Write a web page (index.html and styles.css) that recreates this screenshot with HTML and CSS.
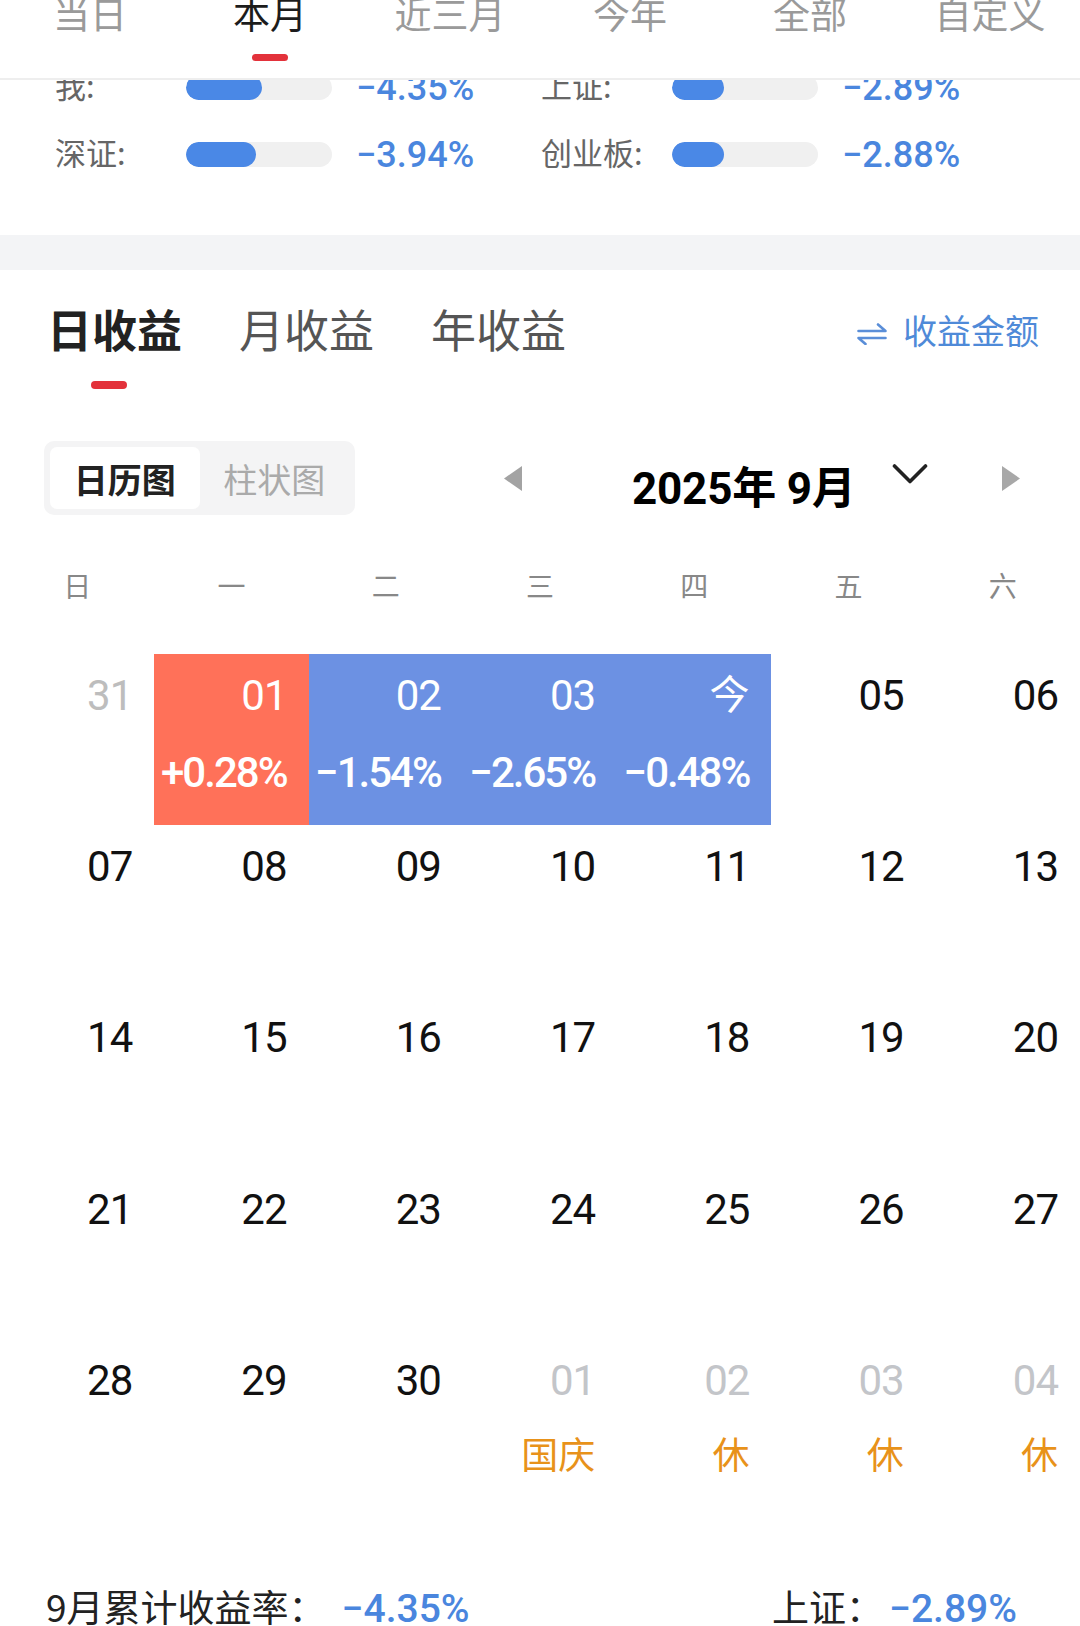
FILE: index.html
```html
<!DOCTYPE html>
<html lang="zh-CN">
<head>
<meta charset="utf-8">
<title>收益日历</title>
<link rel="stylesheet" href="styles.css">
</head>
<body>
<header class="period-tabs">
  <div class="ptab"><span class="ptab-label">当日</span></div>
  <div class="ptab active"><span class="ptab-label">本月</span><i class="ptab-bar"></i></div>
  <div class="ptab"><span class="ptab-label">近三月</span></div>
  <div class="ptab"><span class="ptab-label">今年</span></div>
  <div class="ptab"><span class="ptab-label">全部</span></div>
  <div class="ptab"><span class="ptab-label">自定义</span></div>
</header>

<section class="compare">
  <div class="compare-inner">
    <div class="cmp-row">
      <div class="cmp-item">
        <span class="cmp-label">我:</span>
        <span class="track"><span class="fill" style="width:76px"></span></span>
        <span class="cmp-val">−4.35%</span>
      </div>
      <div class="cmp-item">
        <span class="cmp-label">上证:</span>
        <span class="track"><span class="fill" style="width:52px"></span></span>
        <span class="cmp-val">−2.89%</span>
      </div>
    </div>
    <div class="cmp-row">
      <div class="cmp-item">
        <span class="cmp-label">深证:</span>
        <span class="track"><span class="fill" style="width:70px"></span></span>
        <span class="cmp-val">−3.94%</span>
      </div>
      <div class="cmp-item">
        <span class="cmp-label">创业板:</span>
        <span class="track"><span class="fill" style="width:52px"></span></span>
        <span class="cmp-val">−2.88%</span>
      </div>
    </div>
  </div>
</section>

<div class="band"></div>

<section class="profit">
  <div class="profit-tabs">
    <div class="ttab active"><span class="ttab-label">日收益</span><i class="ttab-bar"></i></div>
    <div class="ttab"><span class="ttab-label">月收益</span></div>
    <div class="ttab"><span class="ttab-label">年收益</span></div>
    <div class="switch">
      <svg class="switch-icon" width="30" height="22" viewBox="0 0 30 22" aria-hidden="true">
        <path d="M1.5 8H28.5L21 1.5" fill="none" stroke="currentColor" stroke-width="2.6" stroke-linecap="round" stroke-linejoin="round"/>
        <path d="M28.5 15H1.5L8.5 21" fill="none" stroke="currentColor" stroke-width="2.6" stroke-linecap="round" stroke-linejoin="round"/>
      </svg>
      <span>收益金额</span>
    </div>
  </div>

  <div class="toolbar">
    <div class="seg">
      <span class="seg-item on">日历图</span>
      <span class="seg-item">柱状图</span>
    </div>
    <div class="month-nav">
      <svg class="tri" width="18" height="25" viewBox="0 0 18 25" aria-hidden="true"><polygon points="18,0 18,25 0,12.5" fill="#a3a3a3"/></svg>
      <span class="month-title">2025年 9月</span>
      <svg class="chev" width="36" height="22" viewBox="0 0 36 22" aria-hidden="true"><polyline points="2.5,3 18,18.5 33.5,3" fill="none" stroke="#222" stroke-width="3.6" stroke-linecap="round" stroke-linejoin="round"/></svg>
      <svg class="tri tri-next" width="18" height="25" viewBox="0 0 18 25" aria-hidden="true"><polygon points="0,0 0,25 18,12.5" fill="#a8a8a8"/></svg>
    </div>
  </div>

  <div class="weekdays">
    <span>日</span><span>一</span><span>二</span><span>三</span><span>四</span><span>五</span><span>六</span>
  </div>

  <div class="cal">
    <div class="cell"><span class="d muted">31</span></div>
    <div class="cell up"><span class="d">01</span><span class="p">+0.28%</span></div>
    <div class="cell down"><span class="d">02</span><span class="p">−1.54%</span></div>
    <div class="cell down"><span class="d">03</span><span class="p">−2.65%</span></div>
    <div class="cell down"><span class="d today">今</span><span class="p">−0.48%</span></div>
    <div class="cell"><span class="d">05</span></div>
    <div class="cell"><span class="d">06</span></div>

    <div class="cell"><span class="d">07</span></div>
    <div class="cell"><span class="d">08</span></div>
    <div class="cell"><span class="d">09</span></div>
    <div class="cell"><span class="d">10</span></div>
    <div class="cell"><span class="d">11</span></div>
    <div class="cell"><span class="d">12</span></div>
    <div class="cell"><span class="d">13</span></div>

    <div class="cell"><span class="d">14</span></div>
    <div class="cell"><span class="d">15</span></div>
    <div class="cell"><span class="d">16</span></div>
    <div class="cell"><span class="d">17</span></div>
    <div class="cell"><span class="d">18</span></div>
    <div class="cell"><span class="d">19</span></div>
    <div class="cell"><span class="d">20</span></div>

    <div class="cell"><span class="d">21</span></div>
    <div class="cell"><span class="d">22</span></div>
    <div class="cell"><span class="d">23</span></div>
    <div class="cell"><span class="d">24</span></div>
    <div class="cell"><span class="d">25</span></div>
    <div class="cell"><span class="d">26</span></div>
    <div class="cell"><span class="d">27</span></div>

    <div class="cell"><span class="d">28</span></div>
    <div class="cell"><span class="d">29</span></div>
    <div class="cell"><span class="d">30</span></div>
    <div class="cell"><span class="d muted2">01</span><span class="h">国庆</span></div>
    <div class="cell"><span class="d muted2">02</span><span class="h">休</span></div>
    <div class="cell"><span class="d muted2">03</span><span class="h">休</span></div>
    <div class="cell"><span class="d muted2">04</span><span class="h">休</span></div>
  </div>

  <div class="summary">
    <div class="sum-item"><span class="sum-label">9月累计收益率：</span><span class="sum-val sum-val-left">−4.35%</span></div>
    <div class="sum-item"><span class="sum-label">上证：</span><span class="sum-val">−2.89%</span></div>
  </div>
</section>
</body>
</html>
```

FILE: styles.css
```css
html, body {
  margin: 0;
  padding: 0;
}

body {
  width: 1080px;
  height: 1626px;
  overflow: hidden;
  background: #ffffff;
  font-family: "Noto Sans CJK SC", "Noto Sans", sans-serif;
  color: #222;
}

/* ---------- period tabs (sticky header) ---------- */
.period-tabs {
  display: grid;
  grid-template-columns: repeat(6, 1fr);
  height: 78px;
  border-bottom: 2px solid #eeeeee;
  background: #fff;
  overflow: hidden;
}

.ptab {
  display: flex;
  flex-direction: column;
  align-items: center;
}

.ptab-label {
  font-size: 37px;
  line-height: 37px;
  margin-top: -5px;
  color: #9a9a9a;
  white-space: nowrap;
}

.ptab.active .ptab-label {
  color: #1c1c1c;
}

.ptab-bar {
  display: block;
  width: 36px;
  height: 7px;
  border-radius: 4px;
  background: #e3323b;
  margin-top: 22px;
}

/* ---------- compare bars ---------- */
.compare {
  height: 154.5px;
  overflow: hidden;
}

.compare-inner {
  margin-top: -26px;
  padding-left: 55px;
}

.cmp-row {
  display: flex;
  height: 67px;
  align-items: center;
}

.cmp-item {
  width: 486px;
  display: flex;
  align-items: center;
}

.cmp-label {
  width: 131px;
  font-size: 31px;
  line-height: 31px;
  margin-bottom: 6px;
  color: #666;
}

.track {
  display: block;
  width: 146px;
  height: 25px;
  border-radius: 13px;
  background: #f0f0f0;
  overflow: hidden;
}

.fill {
  display: block;
  height: 100%;
  border-radius: 13px;
  background: #4a88e6;
}

.cmp-val {
  margin-left: 24px;
  font-family: "Roboto", "Noto Sans CJK SC", sans-serif;
  font-size: 36px;
  line-height: 36px;
  font-weight: 500;
  color: #4a86de;
}

.band {
  height: 35.5px;
  background: #f3f4f6;
}

/* ---------- profit section ---------- */
.profit-tabs {
  display: flex;
  align-items: flex-start;
  padding: 35.5px 41px 0 47px;
}

.ttab {
  display: flex;
  flex-direction: column;
  align-items: flex-start;
  margin-right: 57px;
}

.ttab-label {
  font-size: 45px;
  line-height: 45px;
  color: #555;
  white-space: nowrap;
}

.ttab.active .ttab-label {
  font-weight: 700;
  color: #222;
}

.ttab-bar {
  display: block;
  width: 36px;
  height: 8px;
  border-radius: 4px;
  background: #e3323b;
  margin-top: 30.5px;
  margin-left: 44px;
}

.switch {
  margin-left: auto;
  margin-top: 7px;
  display: flex;
  align-items: flex-start;
  font-size: 34px;
  line-height: 34px;
  color: #4f8ad8;
  white-space: nowrap;
}

.switch-icon {
  margin-top: 10.5px;
  margin-right: 16px;
  color: #5a8ed8;
}

/* toolbar */
.toolbar {
  display: flex;
  align-items: center;
  margin-top: 52px;
  padding-left: 44px;
  height: 74px;
}

.seg {
  display: flex;
  box-sizing: border-box;
  width: 311px;
  height: 74px;
  padding: 6px;
  border-radius: 10px;
  background: #f4f4f5;
}

.seg-item {
  flex: 1;
  display: flex;
  align-items: center;
  justify-content: center;
  font-size: 34px;
  color: #aaaaaa;
  border-radius: 7px;
}

.seg-item.on {
  background: #fff;
  font-weight: 700;
  color: #222;
}

.month-nav {
  flex: 1;
  display: flex;
  align-items: center;
  height: 74px;
}

.tri {
  flex: none;
  margin-left: 149px;
}

.month-title {
  flex: none;
  margin-left: 110px;
  margin-top: 22px;
  font-family: "Roboto", "Noto Sans CJK SC", sans-serif;
  font-size: 44px;
  line-height: 44px;
  font-weight: 700;
  color: #000;
  letter-spacing: -0.2px;
  white-space: nowrap;
}

.chev {
  flex: none;
  margin-left: 36px;
  margin-bottom: 8px;
}

.tri.tri-next {
  margin-left: auto;
  margin-right: 60px;
}

/* weekdays */
.weekdays {
  display: grid;
  grid-template-columns: repeat(7, 1fr);
  margin-top: 56px;
  font-size: 28px;
  line-height: 28px;
  color: #888;
  text-align: center;
}

/* calendar grid */
.cal {
  display: grid;
  grid-template-columns: repeat(7, 1fr);
  grid-auto-rows: 171.4px;
  margin-top: 54.6px;
}

.cell {
  display: flex;
  flex-direction: column;
  align-items: flex-end;
  padding: 21px 22px 0 0;
  font-family: "Roboto", "Noto Sans CJK SC", sans-serif;
}

.cell.up {
  background: #ff7159;
}

.cell.down {
  background: #6c91e3;
}

.d {
  font-size: 42px;
  line-height: 42px;
  letter-spacing: -1px;
  color: #111;
}

.d.muted {
  color: #bdbdbd;
}

.d.muted2 {
  color: #c3c5c9;
}

.d.today {
  font-size: 40px;
  letter-spacing: 0;
}

.cell.up .d,
.cell.down .d {
  color: #fff;
}

.p {
  margin-top: 35px;
  font-size: 42px;
  line-height: 42px;
  font-weight: 500;
  letter-spacing: -2px;
  color: #fff;
  white-space: nowrap;
}

.h {
  margin-top: 30px;
  font-family: "Noto Sans CJK SC", sans-serif;
  font-size: 37px;
  line-height: 42px;
  color: #e8921a;
}

/* summary */
.summary {
  display: flex;
  justify-content: space-between;
  margin-top: 77px;
  padding: 0 63px 0 46px;
}

.sum-item {
  display: flex;
  align-items: baseline;
}

.sum-label {
  font-size: 37px;
  line-height: 37px;
  color: #222;
}

.sum-val {
  margin-left: 6px;
  font-family: "Roboto", "Noto Sans CJK SC", sans-serif;
  font-size: 39px;
  line-height: 37px;
  font-weight: 500;
  color: #4a86de;
}

.sum-val-left {
  margin-left: 16px;
}
```
